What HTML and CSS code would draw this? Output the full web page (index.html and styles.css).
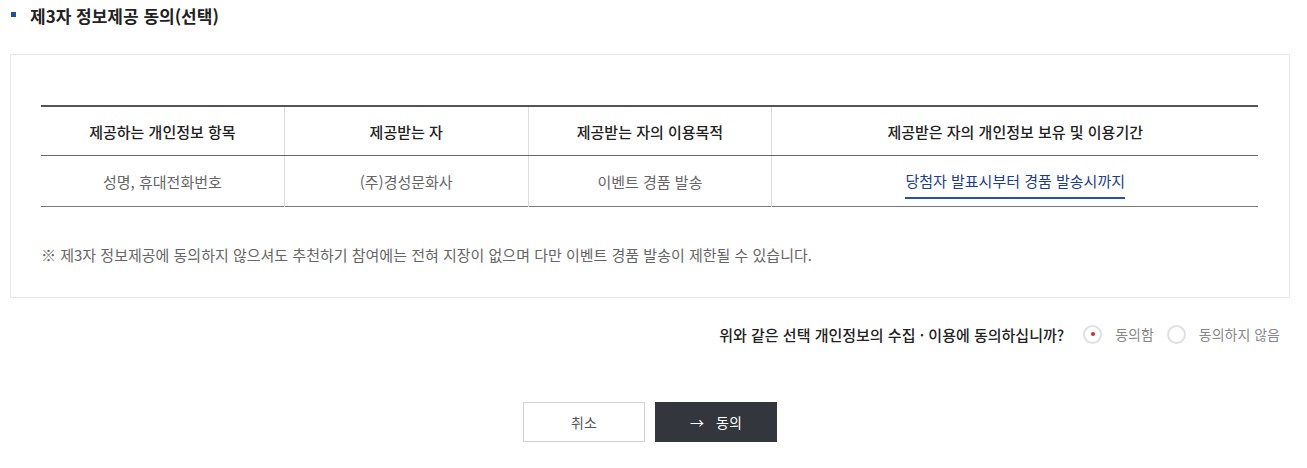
FILE: index.html
```html
<!DOCTYPE html>
<html lang="ko">
<head>
    <meta charset="UTF-8">
    <meta name="viewport" content="width=device-width, initial-scale=1.0">
    <title>제3자 정보제공 동의</title>
    <link rel="stylesheet" href="styles.css">
</head>
<body>
    <div class="wrap">
        <h2 class="sec-title">제3자 정보제공 동의(선택)</h2>

        <div class="agree-box">
            <table class="info-table">
                <thead>
                    <tr>
                        <th>제공하는 개인정보 항목</th>
                        <th>제공받는 자</th>
                        <th>제공받는 자의 이용목적</th>
                        <th class="wide">제공받은 자의 개인정보 보유 및 이용기간</th>
                    </tr>
                </thead>
                <tbody>
                    <tr>
                        <td>성명, 휴대전화번호</td>
                        <td>(주)경성문화사</td>
                        <td>이벤트 경품 발송</td>
                        <td><span class="point">당첨자 발표시부터 경품 발송시까지</span></td>
                    </tr>
                </tbody>
            </table>
            <p class="note">※ 제3자 정보제공에 동의하지 않으셔도 추천하기 참여에는 전혀 지장이 없으며 다만 이벤트 경품 발송이 제한될 수 있습니다.</p>
        </div>

        <div class="question">
            <span class="q-text">위와 같은 선택 개인정보의 수집 · 이용에 동의하십니까?</span>
            <label class="radio"><input type="radio" name="agree3" checked><span class="mark"></span>동의함</label>
            <label class="radio"><input type="radio" name="agree3"><span class="mark"></span>동의하지 않음</label>
        </div>

        <div class="btn-area">
            <button type="button" class="btn btn-cancel">취소</button>
            <button type="button" class="btn btn-ok"><span class="arrow">&rarr;</span>동의</button>
        </div>
    </div>
</body>
</html>
```

FILE: styles.css
```css
body {
    margin: 0;
    font-family: "Noto Sans CJK KR", "Noto Sans", sans-serif;
    color: #222;
    background-color: #fff;
}
.wrap {
    width: 1280px;
    margin-left: 10px;
}
.sec-title {
    position: relative;
    margin: 0;
    padding: 3px 0 0 20px;
    height: 54px;
    box-sizing: border-box;
    font-size: 17px;
    font-weight: bold;
    line-height: 26px;
    color: #222;
}
.sec-title::before {
    content: "";
    position: absolute;
    left: 1px;
    top: 12px;
    width: 5px;
    height: 5px;
    background-color: #1e4fa8;
}
.agree-box {
    border: 1px solid #e8e8e8;
    padding: 50px 31px 31px 30px;
}
.info-table {
    width: 100%;
    border-collapse: collapse;
    table-layout: fixed;
    border-top: 2px solid #555;
    border-bottom: 1px solid #777;
    font-size: 15px;
}
.info-table th,
.info-table td {
    width: 20%;
    padding: 0;
    text-align: center;
    border-left: 1px solid #ddd;
}
.info-table th:first-child,
.info-table td:first-child {
    border-left: 0;
}
.info-table th.wide {
    width: 40%;
}
.info-table th {
    height: 48px;
    font-weight: 500;
    color: #222;
    border-bottom: 1px solid #666;
}
.info-table td {
    height: 50px;
    color: #666;
}
.point {
    display: inline-block;
    vertical-align: top;
    line-height: 22px;
    color: #1c3d96;
    padding: 7px 0 5px;
    border-bottom: 2px solid #2c4da8;
}
.note {
    margin: 37px 0 0;
    font-size: 15px;
    line-height: 22px;
    color: #666;
}
.question {
    display: flex;
    justify-content: flex-end;
    align-items: center;
    padding: 24px 10px 0 0;
    height: 24px;
    font-size: 14px;
}
.q-text {
    font-size: 15px;
    font-weight: 500;
    color: #222;
    margin-right: 19px;
}
.radio {
    display: flex;
    align-items: center;
    color: #888;
    margin-left: 13px;
    cursor: pointer;
}
.radio:first-of-type {
    margin-left: 0;
}
.radio input {
    display: none;
}
.mark {
    position: relative;
    width: 15px;
    height: 15px;
    border: 2px solid #dfe0e2;
    border-radius: 50%;
    margin-right: 13px;
}
.radio input:checked + .mark::after {
    content: "";
    position: absolute;
    left: 5.5px;
    top: 5.5px;
    width: 4px;
    height: 4px;
    border-radius: 50%;
    background-color: #d4262c;
}
.btn-area {
    display: flex;
    justify-content: center;
    gap: 10px;
    margin-top: 56px;
}
.btn {
    width: 122px;
    height: 40px;
    font-family: inherit;
    font-size: 14px;
    cursor: pointer;
}
.btn-cancel {
    border: 1px solid #cfd3d8;
    background-color: #fff;
    color: #555;
}
.btn-ok {
    border: 0;
    background-color: #33363d;
    color: #fff;
}
.arrow {
    margin-right: 12px;
}
```
